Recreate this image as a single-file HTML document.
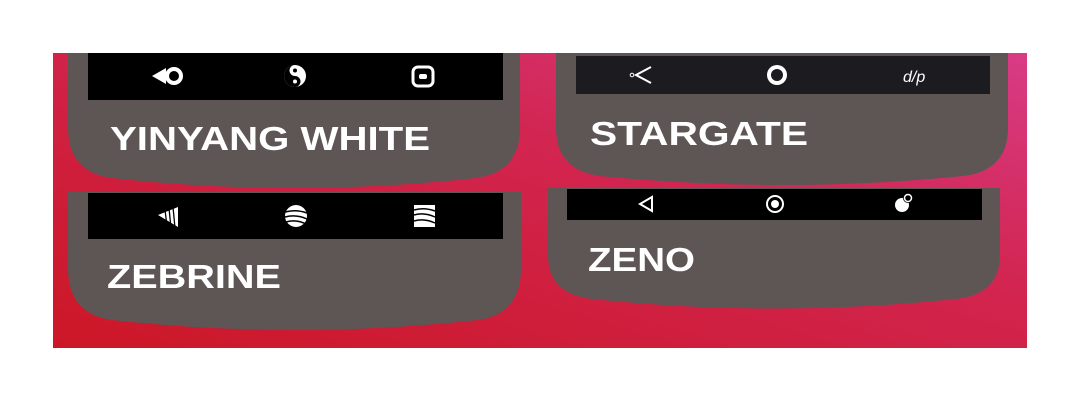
<!DOCTYPE html>
<html><head><style>body{margin:0;background:#fff}svg{display:block}</style></head><body>
<svg width="1080" height="400" viewBox="0 0 1080 400" xmlns="http://www.w3.org/2000/svg">
<defs>
<linearGradient id="bg" x1="0" y1="1" x2="1" y2="0">
<stop offset="0" stop-color="#cc1726"/><stop offset="0.6" stop-color="#d22550"/><stop offset="1" stop-color="#d83c86"/>
</linearGradient>
</defs>
<rect x="53" y="53" width="974" height="295" fill="url(#bg)"/>
<g fill="#5d5655">
<path d="M68,53 H520 V128 Q520,172 476,178 Q294,198 112,178 Q68,172 68,128 Z"/>
<path d="M68,192 H521 V268 Q521,314 478,320 Q294,340 112,320 Q68,314 68,268 Z"/>
<path d="M556,53 H1008 V128 Q1008,170 964,176 Q782,194 600,176 Q556,170 556,128 Z"/>
<path d="M548,188 H1000 V255 Q1000,294 956,299 Q774,318 592,299 Q548,294 548,255 Z"/>
</g>
<rect x="88" y="53" width="415" height="47" fill="#000"/>
<rect x="88" y="193" width="415" height="46" fill="#000"/>
<rect x="576" y="56" width="414" height="38" fill="#1c1b20"/>
<rect x="567" y="189" width="415" height="31" fill="#000"/>
<g fill="#fff" font-family="Liberation Sans, sans-serif" font-weight="bold" font-size="33">
<text x="110" y="150" textLength="320" lengthAdjust="spacingAndGlyphs">YINYANG WHITE</text>
<text x="107" y="288" textLength="174" lengthAdjust="spacingAndGlyphs">ZEBRINE</text>
<text x="590" y="145" textLength="218" lengthAdjust="spacingAndGlyphs">STARGATE</text>
<text x="588" y="271" textLength="107" lengthAdjust="spacingAndGlyphs">ZENO</text>
</g>
<path d="M152,76 L166,68 L166,84 Z" fill="#fff"/>
<circle cx="174" cy="76" r="7" fill="none" stroke="#fff" stroke-width="4"/>
<circle cx="295" cy="76" r="11" fill="#fff"/>
<path d="M295,65 A11,11 0 0 0 295,87 A5.5,5.5 0 0 0 295,76 A5.5,5.5 0 0 1 295,65 Z" fill="#000"/>
<circle cx="295" cy="70.5" r="2" fill="#000"/><circle cx="295" cy="81.5" r="2" fill="#fff"/>
<rect x="413" y="67" width="20" height="19" rx="5" fill="none" stroke="#fff" stroke-width="3"/>
<rect x="419" y="74" width="8" height="5" rx="2" fill="#fff"/>
<path d="M158,215 L178,207 L178,227 Z" fill="#fff"/>
<g stroke="#000" stroke-width="1.3"><line x1="165" y1="210" x2="167" y2="226"/><line x1="169" y1="208" x2="171" y2="228"/><line x1="173" y1="207" x2="175" y2="228"/></g>
<circle cx="296" cy="216" r="11" fill="#fff"/>
<g stroke="#000" stroke-width="1.5" fill="none"><path d="M285,212 Q296,209 307,213"/><path d="M285,217 Q296,214 307,219"/><path d="M286,222 Q296,219 306,224"/></g>
<rect x="414" y="205" width="21" height="22" fill="#fff"/>
<g stroke="#000" stroke-width="1.5" fill="none"><path d="M414,210 Q424,207 435,211"/><path d="M414,215 Q424,212 435,217"/><path d="M414,221 Q424,218 435,223"/></g>
<circle cx="632" cy="75" r="1.8" fill="none" stroke="#fff" stroke-width="1"/>
<path d="M651,67 L636,75 L651,83" fill="none" stroke="#fff" stroke-width="2"/>
<circle cx="777" cy="75" r="10" fill="#fff"/><circle cx="777" cy="75" r="6" fill="#1c1b20"/>
<text x="903" y="82" fill="#fff" font-family="Liberation Sans, sans-serif" font-size="16" font-style="italic">d/p</text>
<path d="M652,197 L640,204 L652,211 Z" fill="none" stroke="#fff" stroke-width="2"/>
<circle cx="775" cy="204" r="8" fill="none" stroke="#fff" stroke-width="2"/><circle cx="775" cy="204" r="4" fill="#fff"/>
<circle cx="902" cy="205" r="7" fill="#fff"/><circle cx="908" cy="198" r="5" fill="#000"/><circle cx="908" cy="198" r="3.5" fill="none" stroke="#fff" stroke-width="1.5"/>
</svg>
</body></html>
